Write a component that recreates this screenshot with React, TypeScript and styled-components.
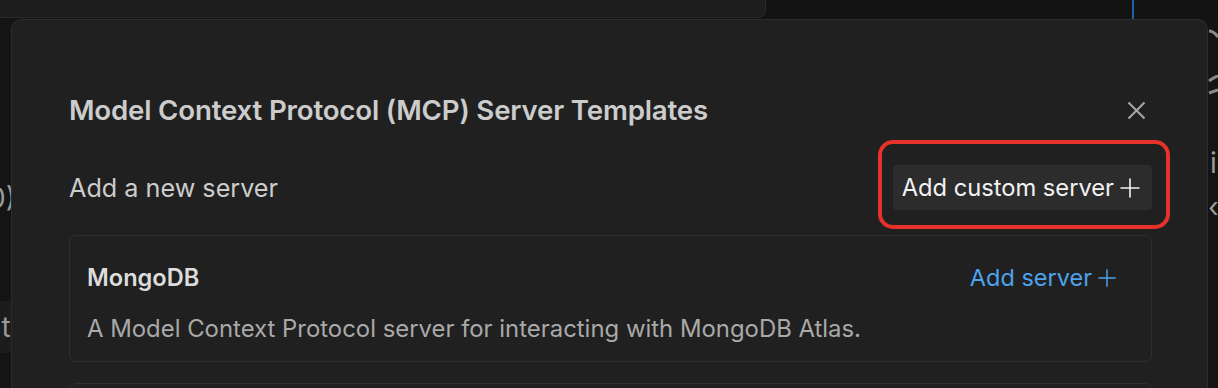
import React from "react";
import styled, { createGlobalStyle } from "styled-components";

const Global = createGlobalStyle`
  html, body { margin: 0; padding: 0; background: #131313; }
  body { font-family: Inter, "Noto Sans", sans-serif; -webkit-font-smoothing: antialiased; }
  * { box-sizing: border-box; }
`;

const Page = styled.div`
  width: 1218px;
  height: 388px;
  overflow: hidden;
  display: flex;
  flex-direction: column;
  background: #131313;
`;

const TopStrip = styled.div`
  height: 19px;
  display: flex;
  flex-shrink: 0;
`;

const TopPanel = styled.div`
  width: 766px;
  height: 18px;
  background: #1d1d1d;
  border: 1px solid #2a2a2a;
  border-top: none;
  border-left: none;
  border-bottom-right-radius: 8px;
`;

const TopRight = styled.div`
  flex: 1;
  display: flex;
  padding-left: 366px;
`;

const BlueLine = styled.div`
  width: 2px;
  height: 19px;
  background: #1f5fa8;
`;

const Main = styled.div`
  flex: 1;
  display: flex;
  min-height: 0;
`;

const Gutter = styled.div<{ $side: "left" | "right" }>`
  width: ${(p) => (p.$side === "left" ? "11px" : "10px")};
  flex-shrink: 0;
  display: flex;
  flex-direction: column;
  overflow: hidden;
  color: #9a9a9a;
  font-size: 28px;
  line-height: 32px;
  background: #141414;
`;

const GutterText = styled.div<{ $top: number; $shift: number; $bg?: string }>`
  margin-top: ${(p) => p.$top}px;
  margin-left: ${(p) => p.$shift}px;
  white-space: nowrap;
  background: ${(p) => p.$bg || "transparent"};
  padding: ${(p) => (p.$bg ? "10px 0" : "0")};
`;

const GutterMark = styled.svg`
  display: block;
  margin-top: 10px;
  flex-shrink: 0;
  color: #8a8a8a;
`;

const Modal = styled.div`
  flex: 1;
  background: #202020;
  border: 1px solid #2b2b2b;
  border-bottom: none;
  border-radius: 10px 10px 0 0;
  padding: 73px 55px 0 57px;
  display: flex;
  flex-direction: column;
`;

const Header = styled.div`
  display: flex;
  align-items: center;
  justify-content: space-between;
  height: 34px;
`;

const Title = styled.h1`
  margin: 0;
  font-size: 27.7px;
  line-height: 34px;
  font-weight: 600;
  color: #cccccc;
  letter-spacing: -0.2px;
`;

const CloseButton = styled.button`
  width: 30px;
  height: 30px;
  margin-right: 1px;
  background: none;
  border: none;
  padding: 0;
  display: flex;
  align-items: center;
  justify-content: center;
  color: #a8a8a8;
`;

const SubRow = styled.div`
  margin-top: 38px;
  display: flex;
  align-items: center;
  justify-content: space-between;
`;

const Subtitle = styled.div`
  font-size: 25.2px;
  line-height: 30px;
  color: #cccccc;
`;

const CustomButton = styled.button`
  position: relative;
  height: 45px;
  padding: 0 11px 0 9px;
  background: #2c2c2c;
  border: none;
  border-radius: 4px;
  color: #f2f2f2;
  font-family: inherit;
  font-size: 23.7px;
  display: flex;
  align-items: center;
  gap: 5px;

  &::after {
    content: "";
    position: absolute;
    top: -25px;
    bottom: -19px;
    left: -15px;
    right: -18px;
    border: 4px solid #e5322b;
    border-radius: 15px;
    pointer-events: none;
  }
`;

const Card = styled.div<{ $stub?: boolean }>`
  margin-top: ${(p) => (p.$stub ? "21px" : "25px")};
  border: 1px solid #2f2f2f;
  border-radius: 7px;
  padding: 27px 34px 17px 17px;
  display: flex;
  flex-direction: column;
  gap: 21px;
  flex-shrink: 0;
  min-height: ${(p) => (p.$stub ? "60px" : "auto")};
`;

const CardHead = styled.div`
  display: flex;
  align-items: center;
  justify-content: space-between;
  height: 30px;
`;

const CardTitle = styled.div`
  font-size: 23.6px;
  line-height: 30px;
  font-weight: 600;
  color: #dcdcdc;
`;

const LinkButton = styled.button`
  background: none;
  border: none;
  padding: 0;
  color: #4da3ee;
  font-family: inherit;
  font-size: 23.5px;
  line-height: 30px;
  display: flex;
  align-items: center;
  gap: 5px;
`;

const Description = styled.div`
  font-size: 23.9px;
  line-height: 30px;
  color: #a9a9a9;
`;

const Plus = ({ size = 22 }: { size?: number }) => (
  <svg width={size} height={size} viewBox="0 0 22 22" fill="none">
    <path d="M11 1.5v19M1.5 11h19" stroke="currentColor" strokeWidth="1.6" />
  </svg>
);

const Close = () => (
  <svg width="19" height="19" viewBox="0 0 19 19" fill="none">
    <path d="M1.5 1.5l16 16M17.5 1.5l-16 16" stroke="currentColor" strokeWidth="2" />
  </svg>
);

export default function App() {
  return (
    <>
      <Global />
      <Page>
        <TopStrip>
          <TopPanel />
          <TopRight>
            <BlueLine />
          </TopRight>
        </TopStrip>
        <Main>
          <Gutter $side="left">
            <GutterText $top={163} $shift={-12}>0)</GutterText>
            <GutterText $top={87} $shift={-15} $bg="#1c1c1c">nt</GutterText>
          </Gutter>
          <Modal>
            <Header>
              <Title>Model Context Protocol (MCP) Server Templates</Title>
              <CloseButton aria-label="Close">
                <Close />
              </CloseButton>
            </Header>
            <SubRow>
              <Subtitle>Add a new server</Subtitle>
              <CustomButton>
                Add custom server
                <Plus />
              </CustomButton>
            </SubRow>
            <Card>
              <CardHead>
                <CardTitle>MongoDB</CardTitle>
                <LinkButton>
                  Add server
                  <Plus size={20} />
                </LinkButton>
              </CardHead>
              <Description>
                A Model Context Protocol server for interacting with MongoDB Atlas.
              </Description>
            </Card>
            <Card $stub />
          </Modal>
          <Gutter $side="right">
            <GutterMark width="10" height="80" viewBox="0 0 10 80" fill="none">
              <path d="M1 2c3 0 6 2 9 6" stroke="currentColor" strokeWidth="3" />
              <path d="M1 52c3-2 6-4 9-5M1 64c3-1 6-2 9-3" stroke="currentColor" strokeWidth="3" />
            </GutterMark>
            <GutterText $top={38} $shift={2}>i</GutterText>
            <GutterText $top={12} $shift={0}>‹</GutterText>
          </Gutter>
        </Main>
      </Page>
    </>
  );
}
